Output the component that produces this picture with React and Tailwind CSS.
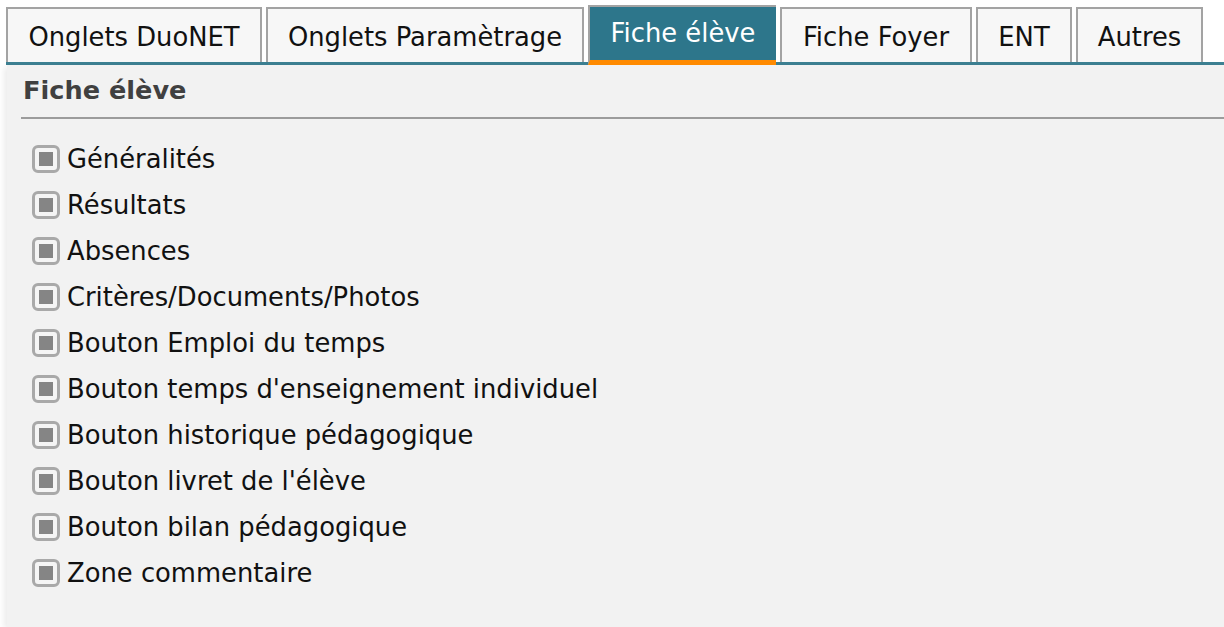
import React from 'react';

const tabs = [
  { label: 'Onglets DuoNET', w: 'w-[256px]' },
  { label: 'Onglets Paramètrage', w: 'w-[318px]' },
  { label: 'Fiche élève', w: 'w-[188px]', active: true },
  { label: 'Fiche Foyer', w: 'w-[192px]' },
  { label: 'ENT', w: 'w-[96px]' },
  { label: 'Autres', w: 'w-[127px]' },
];

const items = [
  'Généralités',
  'Résultats',
  'Absences',
  'Critères/Documents/Photos',
  'Bouton Emploi du temps',
  "Bouton temps d'enseignement individuel",
  'Bouton historique pédagogique',
  "Bouton livret de l'élève",
  'Bouton bilan pédagogique',
  'Zone commentaire',
];

const Check = () => (
  <div className="w-[28px] h-[28px] shrink-0 rounded-[6px] border-[3px] border-[#a9a9a9] bg-[#f5f5f5] flex items-center justify-center">
    <div className="w-[14px] h-[14px] bg-[#858585]" />
  </div>
);

export default function App() {
  return (
    <div className="min-h-screen bg-white font-['DejaVu_Sans',sans-serif] overflow-hidden">
      {/* Tabs */}
      <div className="pl-[6px] pt-[5px]">
        <div className="flex items-end gap-[4px] border-b-[3px] border-[#3d8193]">
          {tabs.map((t) =>
            t.active ? (
              <div
                key={t.label}
                className={`${t.w} h-[60px] -mb-[3px] border-t-2 border-l-2 border-[#a3a3a3] border-b-[5px] border-b-[#ff8a00] bg-[#2d768b] text-white text-[25.8px] flex items-center justify-center pb-[1px] whitespace-nowrap`}
              >
                {t.label}
              </div>
            ) : (
              <div
                key={t.label}
                className={`${t.w} h-[55px] border-2 border-b-0 border-[#a3a3a3] bg-[#f7f7f7] text-[#111] text-[25.8px] flex items-center justify-center pt-[4px] whitespace-nowrap`}
              >
                {t.label}
              </div>
            )
          )}
        </div>
      </div>

      {/* Panel */}
      <div className="ml-[7px] min-h-[562px] bg-[#f2f2f2] shadow-[-3px_2px_6px_rgba(0,0,0,0.08)]">
        <div className="pl-[16px] pt-[10px] text-[25.6px] font-bold text-[#404040] leading-[30px]">
          Fiche élève
        </div>
        <div className="ml-[14px] mt-[12px] h-[2px] bg-[#9c9c9c]" />
        <div className="mt-[17px] flex flex-col">
          {items.map((it) => (
            <div key={it} className="h-[46px] flex items-center gap-[7px] pl-[25px]">
              <Check />
              <span className="text-[25.8px] text-[#111] whitespace-nowrap">{it}</span>
            </div>
          ))}
        </div>
      </div>
    </div>
  );
}
